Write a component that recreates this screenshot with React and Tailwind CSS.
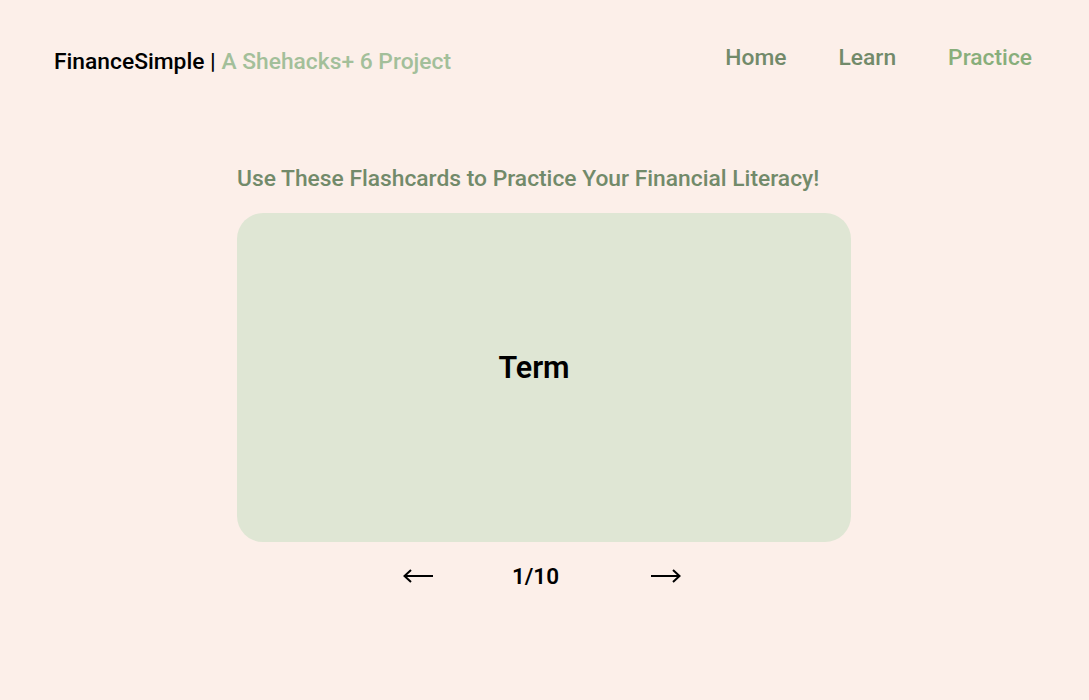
import React, { useState } from 'react';

const cards = [
  { term: 'Term', definition: 'Definition' },
  { term: 'Budget', definition: 'A plan for how you spend and save money.' },
  { term: 'Interest', definition: 'The cost of borrowing money.' },
  { term: 'Credit Score', definition: 'A number showing how reliable a borrower is.' },
  { term: 'Asset', definition: 'Something you own that has value.' },
  { term: 'Liability', definition: 'Something you owe.' },
  { term: 'Inflation', definition: 'The rise of prices over time.' },
  { term: 'Dividend', definition: 'A share of company profits paid to owners.' },
  { term: 'Stock', definition: 'A share of ownership in a company.' },
  { term: 'Bond', definition: 'A loan you make to a government or company.' },
];

const App = () => {
  const [index, setIndex] = useState(0);
  const [flipped, setFlipped] = useState(false);

  const card = cards[index];

  const go = (step) => {
    setFlipped(false);
    setIndex((i) => (i + step + cards.length) % cards.length);
  };

  return (
    <div className="min-h-screen bg-[#fcefe9] font-['Roboto',sans-serif]">
      {/* Header */}
      <header className="flex items-center justify-between pl-[54px] pr-[57px] pt-[44px]">
        <div className="text-[22.8px] font-medium leading-[32px] pt-[2px]">
          <span className="text-black">FinanceSimple</span>
          <span className="text-black"> | </span>
          <span className="text-[#a3bf9a]">A Shehacks+ 6 Project</span>
        </div>
        <nav className="flex items-center gap-[52px] text-[22.8px] font-medium leading-[28px] -mt-[6px]">
          <a href="#" className="text-[#728a6a]">Home</a>
          <a href="#" className="text-[#728a6a]">Learn</a>
          <a href="#" className="text-[#88ae7b]">Practice</a>
        </nav>
      </header>

      {/* Flashcards */}
      <main className="flex flex-col items-center pt-[87px] pr-[1px]">
        <div className="w-[614px]">
          <h2 className="text-[22.8px] font-medium leading-[28px] text-[#728a6a]">
            Use These Flashcards to Practice Your Financial Literacy!
          </h2>
          <button
            onClick={() => setFlipped(!flipped)}
            className="mt-[20px] flex h-[329px] w-[614px] items-center justify-center rounded-[26px] bg-[#dfe6d4] pb-[19px] pr-[20px]"
          >
            <span className="text-[30.5px] font-semibold text-black">
              {flipped ? card.definition : card.term}
            </span>
          </button>
          <div className="mt-[20px] flex items-center justify-center pr-[4px] text-black">
            <button onClick={() => go(-1)} aria-label="Previous" className="mr-[78px]">
              <svg width="31" height="14" viewBox="0 0 31 14" fill="none" stroke="black" strokeWidth="2">
                <path d="M1 7h29M8 1L1.5 7 8 13" />
              </svg>
            </button>
            <span className="text-[22.5px] font-semibold leading-[28px]">{index + 1}/{cards.length}</span>
            <button onClick={() => go(1)} aria-label="Next" className="ml-[92px]">
              <svg width="30" height="14" viewBox="0 0 30 14" fill="none" stroke="black" strokeWidth="2">
                <path d="M0 7h28.5M22 1l6.5 6L22 13" />
              </svg>
            </button>
          </div>
        </div>
      </main>
    </div>
  );
};

export default App;
